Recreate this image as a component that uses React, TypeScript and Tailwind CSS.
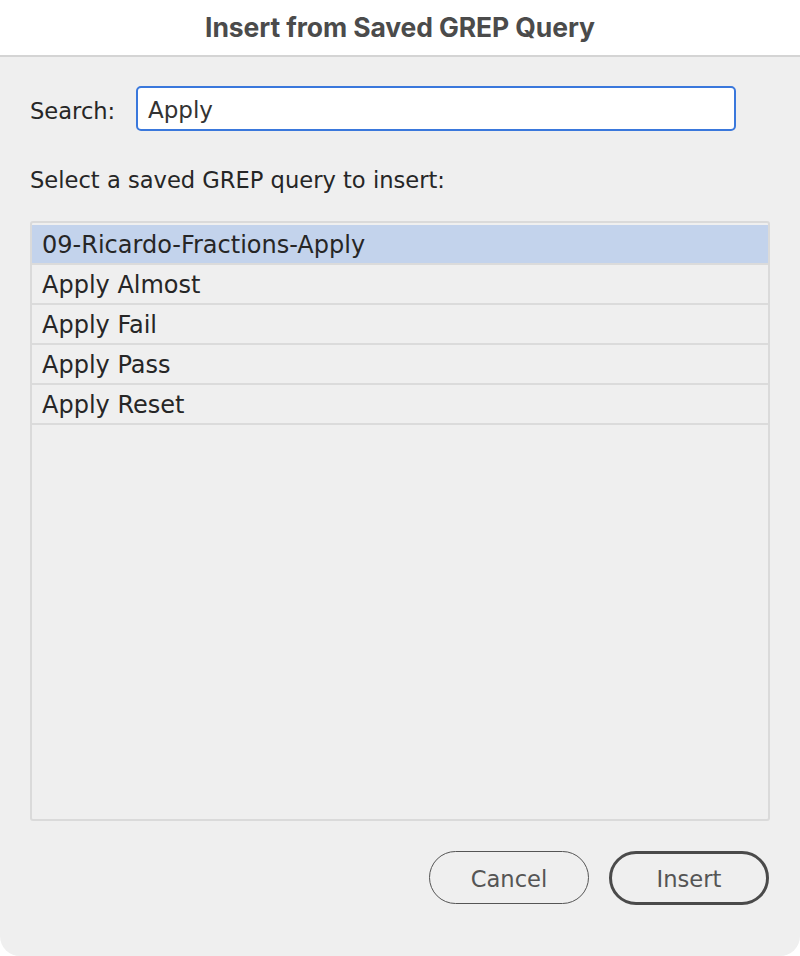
const rows = [
    "09-Ricardo-Fractions-Apply",
    "Apply Almost",
    "Apply Fail",
    "Apply Pass",
    "Apply Reset",
];

export default function App() {
    return (
        <div className="w-[800px] h-[956px] bg-white">
            <div className="flex flex-col h-full bg-[#efefef] rounded-b-[20px] overflow-hidden font-['DejaVu_Sans',sans-serif] text-[22.6px] text-[#262626]">
                {/* title bar */}
                <div className="h-[57px] shrink-0 bg-white border-b-2 border-[#d4d4d4] flex items-center justify-center">
                    <h1 className="font-['Inter',sans-serif] font-bold text-[26.5px] text-[#4b4b4b] tracking-[-0.1px]">
                        Insert from Saved GREP Query
                    </h1>
                </div>

                <div className="flex flex-col flex-1 pl-[30px] pr-[30px]">
                    {/* search */}
                    <div className="flex items-center mt-[29px] h-[45px]">
                        <label className="w-[106px] shrink-0 leading-none pt-[5px]">Search:</label>
                        <div className="w-[600px] h-[45px] bg-white border-[2.5px] border-[#3a78dc] rounded-[5px] flex items-center px-[10px] pt-[4px] text-[#333] text-[23px]">
                            Apply
                        </div>
                    </div>

                    <p className="mt-[38px] leading-none h-[22px]">Select a saved GREP query to insert:</p>

                    {/* list */}
                    <div className="mt-[30px] h-[600px] w-[740px] border-2 border-[#dadada] rounded-[3px] pt-[2px] text-[24px]">
                        {rows.map((r, i) => (
                            <div
                                key={r}
                                className={
                                    "h-[40px] flex items-center pl-[10px] pt-[2px] border-b-2 border-[#dbdbdb] " +
                                    (i === 0 ? "bg-[#c3d3ec]" : "")
                                }
                            >
                                {r}
                            </div>
                        ))}
                    </div>

                    {/* buttons */}
                    <div className="flex justify-end gap-[20px] mt-[30px] pr-[1px]">
                        <button className="w-[160px] h-[53px] rounded-full border-[1.5px] border-[#555] text-[#555] leading-none pt-[3px]">
                            Cancel
                        </button>
                        <button className="w-[160px] h-[54px] rounded-full border-[3.5px] border-[#4a4a4a] text-[#555] leading-none pt-[3px]">
                            Insert
                        </button>
                    </div>
                </div>
            </div>
        </div>
    );
}
